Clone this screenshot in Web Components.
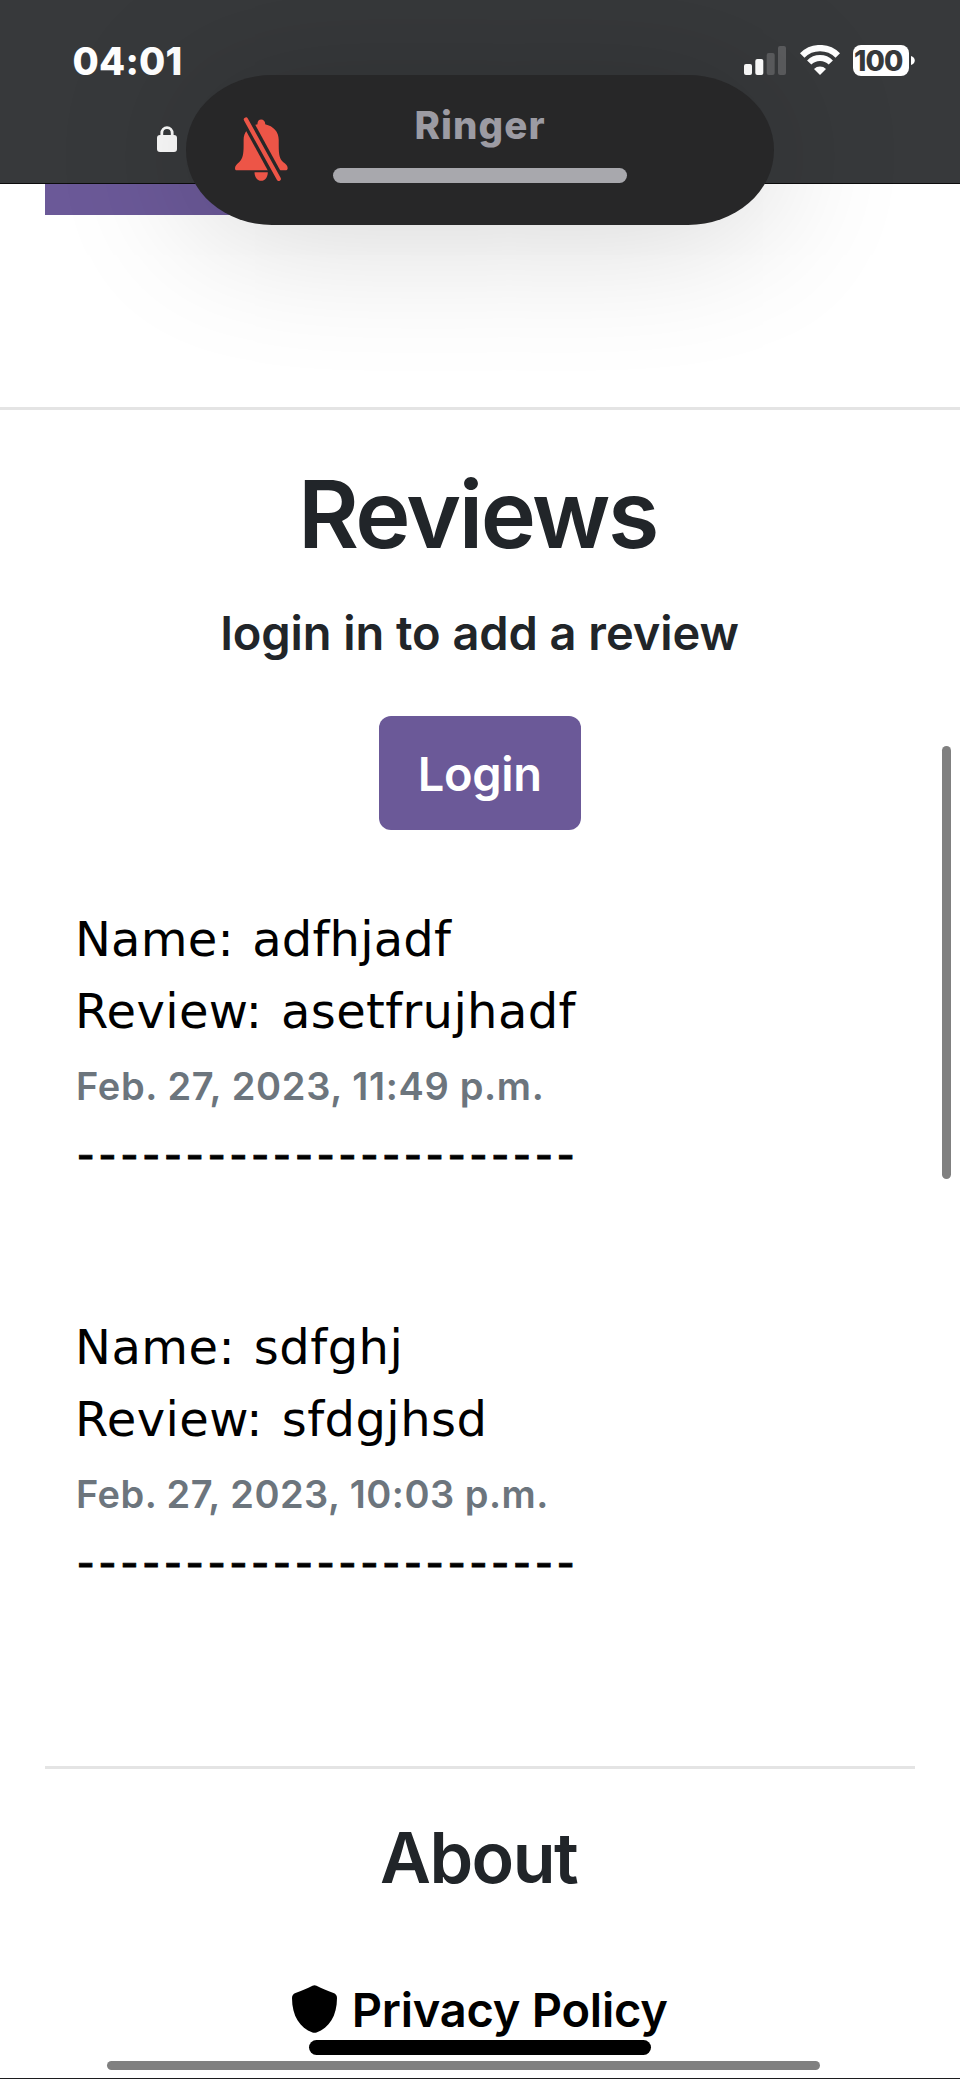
<!DOCTYPE html>
<html lang="en">
<head>
<meta charset="utf-8">
<title>Reviews</title>
<style>
html,body{margin:0;background:#fff}
body{font-family:Inter,"Liberation Sans",sans-serif;width:960px;height:2079px;overflow:hidden}
</style>
</head>
<body>
<phone-screen>
  <status-bar slot="bar"></status-bar>
  <ringer-island slot="overlay"></ringer-island>
  <reviews-section>
    <review-card name="adfhjadf" nw="373" review="asetfrujhadf" rw="497.5" date="Feb. 27, 2023, 11:49 p.m." dw="466"></review-card>
    <review-card name="sdfghj" nw="319.5" review="sfdgjhsd" rw="404.5" date="Feb. 27, 2023, 10:03 p.m." dw="470.5"></review-card>
  </reviews-section>
  <about-section></about-section>
</phone-screen>
<script>
const define = (name, html) => customElements.define(name, class extends HTMLElement {
  constructor() {
    super();
    this.attachShadow({mode: 'open'}).innerHTML = html;
  }
});

/* A single line of text tracked so that its ink spans the "ink" width. */
customElements.define('fit-text', class extends HTMLElement {
  constructor() {
    super();
    this.attachShadow({mode: 'open'}).innerHTML =
      '<style>:host{display:block;flex:none;white-space:pre}span{display:inline-block}</style><span><slot></slot></span>';
  }
  connectedCallback() {
    const text = this.textContent, ink = +this.getAttribute('ink');
    const cs = getComputedStyle(this);
    const ctx = document.createElement('canvas').getContext('2d');
    ctx.font = `${cs.fontWeight} ${cs.fontSize} ${cs.fontFamily}`;
    const m = ctx.measureText(text);
    const spaces = (text.split(' ').length - 1) * (parseFloat(cs.wordSpacing) || 0);
    const natural = m.actualBoundingBoxLeft + m.actualBoundingBoxRight + spaces;
    this.style.width = ink + 'px';
    this.style.letterSpacing = ((ink - natural) / (text.length - 1)).toFixed(3) + 'px';
    this.shadowRoot.querySelector('span').style.marginLeft = m.actualBoundingBoxLeft.toFixed(2) + 'px';
  }
});

define('phone-screen', `
<style>
:host{display:block;position:relative;width:960px;height:2079px;overflow:hidden;background:#fff;box-sizing:border-box}
.v,.h,.home,.edge{position:absolute}
.v{left:942px;top:746px;width:9px;height:433px;border-radius:5px;background:#808080}
.h{left:107px;top:2061px;width:713px;height:9px;border-radius:5px;background:#808080}
.home{left:309px;top:2040px;width:342px;height:15px;border-radius:8px;background:#000}
.edge{left:0;bottom:0;width:960px;height:1px;background:#1c1c1e}
</style>
<slot name="bar"></slot><slot></slot>
<div class="v"></div><div class="h"></div><div class="home"></div><div class="edge"></div>
<slot name="overlay"></slot>`);

define('status-bar', `
<style>
:host{display:block;height:184px;box-sizing:border-box;background:#37393b;border-bottom:1px solid #0c0c0c;color:#fff}
.top{display:flex;align-items:flex-start;padding:45px 45px 0 73.5px;height:81px;box-sizing:border-box}
.time{font-weight:800;font-size:38px;line-height:32px}
.icons{margin-left:auto;display:flex;align-items:flex-start}
svg{display:block}
.wifi{margin-left:14px}
.bat{margin-left:13px;width:56px;height:31px;border-radius:8px;background:#fff;color:#37393b;display:flex;padding:1px 0 0 2px;box-sizing:border-box;font-weight:800;font-size:28px;line-height:31px}
.nub{margin:11px 0 0 2px}
.url{padding:45px 0 0 157px}
</style>
<div class="top">
  <fit-text class="time" ink="107">04:01</fit-text>
  <div class="icons">
    <svg width="42" height="31" viewBox="0 0 42 31"><g fill="#fff"><rect y="19" width="8" height="11" rx="2"/><rect x="11.3" y="14" width="8" height="16" rx="2"/></g><g fill="#5b5c5e"><rect x="22.7" y="8" width="8" height="22" rx="2"/><rect x="34" y="1" width="8" height="29" rx="2"/></g></svg>
    <svg class="wifi" width="40" height="30" viewBox="0 0 40 30"><g fill="none" stroke="#fff"><path d="M2.2 10.5A25.2 25.2 0 0 1 37.8 10.5" stroke-width="6.4"/><path d="M9.2 17.5A15.3 15.3 0 0 1 30.8 17.5" stroke-width="6"/></g><path fill="#fff" d="M20 30L14 24A8.5 8.5 0 0 1 26 24Z"/></svg>
    <div class="bat"><fit-text ink="48">100</fit-text></div>
    <svg class="nub" width="4" height="9" viewBox="0 0 4 9"><path fill="#fff" d="M0 0C5 1.5 5 7.5 0 9Z"/></svg>
  </div>
</div>
<div class="url"><svg width="20" height="26" viewBox="0 0 20 26"><rect y="9" width="20" height="17" rx="3" fill="#fafafa"/><path d="M4.8 11V7.2A5.2 5.6 0 0 1 15.2 7.2V11" fill="none" stroke="#fafafa" stroke-width="2.8"/></svg></div>`);

define('ringer-island', `
<style>
:host{position:absolute;left:186px;top:75px;width:588px;height:149.5px;border-radius:86px / 75px;background:#272728;box-shadow:0 6px 145px rgba(0,0,0,.185);display:flex;box-sizing:border-box}
.bell{margin:42px 0 0 49px;flex:none}
.mid{margin-left:45px;width:294px;display:flex;flex-direction:column;align-items:center}
.label{font-weight:800;font-size:38.5px;line-height:46px;color:#9c9ba3;margin:26.5px 0 0 1px}
.level{width:294px;height:15px;border-radius:7.5px;background:#a8a8ad;margin-top:20.5px}
</style>
<svg class="bell" width="53" height="64" viewBox="105 80 160 192">
<mask id="m"><rect x="100" y="70" width="180" height="210" fill="#fff"/><path d="M110 35L265 318" stroke="#000" stroke-width="33"/></mask>
<g fill="#ed5547"><g mask="url(#m)"><path d="M173 101C172 93 177 87 184 87C191 87 197 93 196 101C221 107 237 123 237 149V166C237 194 240 206 250 215C259 222 264 226 264 233C264 238 262 240 257 240H111C106 240 105 238 105 233C105 226 111 222 118 215C128 205 131 193 131 166V149C131 123 148 107 173 101Z"/></g><path d="M164 246H204C204 262 195 272 184 272C173 272 164 262 164 246Z"/></g>
<path d="M138 87L237 266" stroke="#ed5547" stroke-width="13" stroke-linecap="round"/></svg>
<div class="mid"><fit-text class="label" ink="128">Ringer</fit-text><div class="level"></div></div>`);

define('reviews-section', `
<style>
:host{display:flex;flex-direction:column;align-items:center;color:#212529;font-weight:600}
.banner{align-self:flex-start;margin-left:45px;width:540px;height:31px;background:#6b5998}
.rule{width:960px;height:3px;background:#e4e4e4;margin-top:192px}
.title{font-size:93.5px;line-height:112px;margin-top:48px}
.sub{font-size:47px;line-height:56px;margin:35px 0 0 2px}
.btn{width:202px;height:114px;border-radius:12px;background:#6b5998;color:#fff;margin-top:55px;border:0;display:flex;align-items:center;justify-content:center;padding:2px 0 0;box-sizing:border-box;font:600 47px/56px Inter,"Liberation Sans",sans-serif}
.list{align-self:stretch;display:flex;flex-direction:column;gap:120px;padding:73px 0 0 78px;height:936px;box-sizing:border-box}
</style>
<div class="banner"></div>
<div class="rule"></div>
<fit-text class="title" ink="352">Reviews</fit-text>
<fit-text class="sub" ink="515">login in to add a review</fit-text>
<button class="btn"><fit-text ink="118.5">Login</fit-text></button>
<div class="list"><slot></slot></div>`);

customElements.define('review-card', class extends HTMLElement {
  connectedCallback() {
    const a = n => this.getAttribute(n);
    this.attachShadow({mode: 'open'}).innerHTML = `
<style>
:host{display:block;height:288px;color:#000;font:400 48px/72px "DejaVu Sans",sans-serif}
fit-text{margin-left:1px}
.line{word-spacing:3px}
.date{font:600 38px/72px Inter,"Liberation Sans",sans-serif;color:#6c757d;padding-top:2.5px;height:69.5px;margin-left:0}
.dash{margin-top:-2px;-webkit-text-stroke:.8px #000}
</style>
<fit-text class="line" ink="${a('nw')}">Name: ${a('name')}</fit-text>
<fit-text class="line" ink="${a('rw')}">Review: ${a('review')}</fit-text>
<fit-text class="date" ink="${a('dw')}">${a('date')}</fit-text>
<fit-text class="dash" ink="493">-----------------------</fit-text>`;
  }
});

define('about-section', `
<style>
:host{display:flex;flex-direction:column;align-items:center;font-weight:600;padding-right:1px}
.rule{width:870px;height:3px;background:#e4e4e4;margin-left:1px}
.title{font-size:70px;line-height:84px;margin-top:46.5px;color:#212529}
.link{display:flex;gap:18px;margin-top:74.5px;font-size:47px;line-height:72px;color:#000}
svg{margin-top:11px}
</style>
<div class="rule"></div>
<fit-text class="title" ink="197">About</fit-text>
<div class="link"><svg width="45" height="48" viewBox="0 0 45 48"><path d="M20.5 .8Q22.5 -.3 24.5 .8C30 3.8 35 5.6 41.5 8Q45 9.4 45 13C45 31 37 43 24.5 47.4Q22.5 48.2 20.5 47.4C8 43 0 31 0 13Q0 9.4 3.5 8C10 5.6 15 3.8 20.5 .8Z"/></svg><fit-text ink="312.5">Privacy Policy</fit-text></div>`);
</script>
</body>
</html>
